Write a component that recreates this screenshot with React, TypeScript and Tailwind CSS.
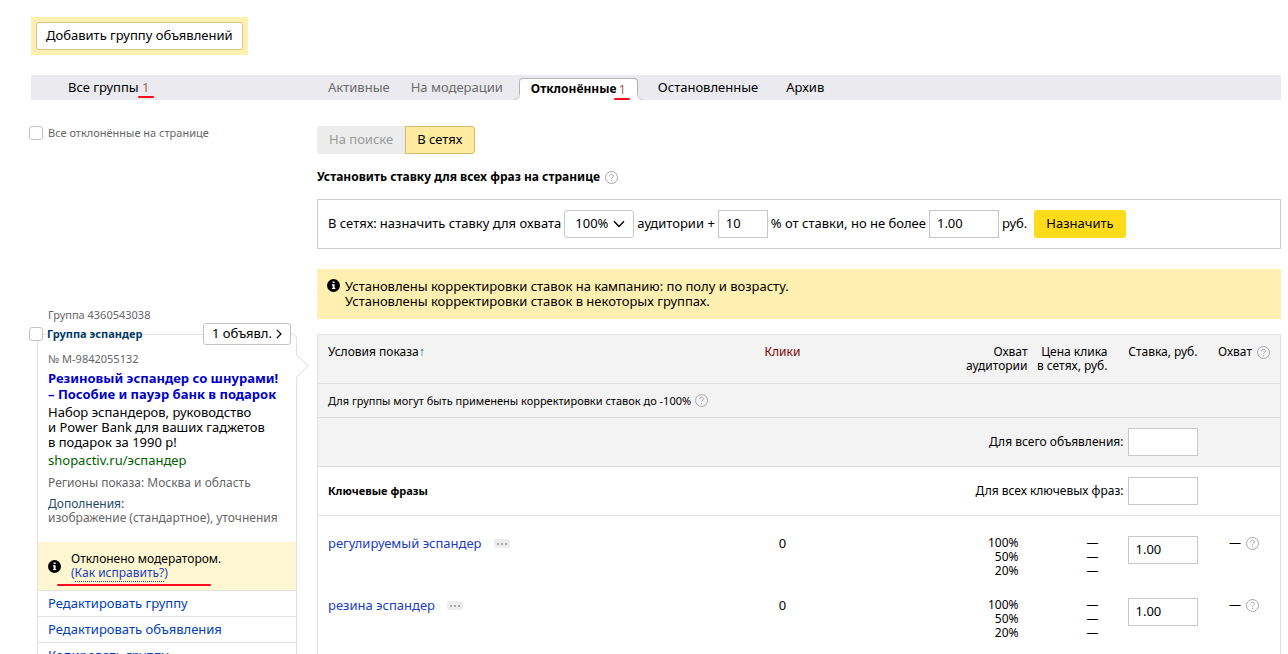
import type { ReactNode } from "react";
import clsx from "clsx";

interface Phrase {
  id: number;
  text: string;
  clicks: number;
  bid: string;
}

const phrases: Phrase[] = [
  { id: 1, text: "регулируемый эспандер", clicks: 0, bid: "1.00" },
  { id: 2, text: "резина эспандер", clicks: 0, bid: "1.00" },
];

const coverage = ["100%", "50%", "20%"];

function HelpIcon() {
  return (
    <svg className="inline-block h-[13px] w-[13px] shrink-0" viewBox="0 0 13 13" fill="none" stroke="#a8a8a8">
      <circle cx="6.5" cy="6.5" r="6" />
      <path d="M4.6 5.2c0-1.2.8-1.9 1.9-1.9s1.9.7 1.9 1.7c0 1.3-1.8 1.4-1.8 2.8" />
      <path d="M6.6 8.9v1.2" />
    </svg>
  );
}

function InfoIcon() {
  return (
    <svg className="h-[13px] w-[13px] shrink-0" viewBox="0 0 13 13">
      <circle cx="6.5" cy="6.5" r="6.5" fill="#000" />
      <path d="M5.6 2.4h2v1.7h-2zM4.9 5.3h2.7v3.6h.7v1.2H4.9V8.9h.8V6.5h-.8z" fill="#fff" />
    </svg>
  );
}

function Checkbox({ id }: { id: string }) {
  return (
    <input
      id={id}
      type="checkbox"
      className="h-[14px] w-[14px] shrink-0 appearance-none rounded-[3px] border border-[#c4c4c4] bg-white checked:bg-[#ffdb4d]"
    />
  );
}

function Field({ id, value = "", className, label }: { id: string; value?: string; className?: string; label?: string }) {
  return (
    <input
      id={id}
      type="text"
      defaultValue={value}
      aria-label={label}
      className={clsx("h-7 border border-[#c8c8c8] bg-white px-[7px] pb-[2px] text-[13px] text-black outline-none", className)}
    />
  );
}

// Счётчик с красным подчёркиванием
function Count({ children }: { children: ReactNode }) {
  return (
    <span className="relative text-[13px] font-normal text-[#996658]">
      {children}
      <span className="absolute -inset-x-1 top-full h-[2px] rounded-full bg-[#ff0a1e]" />
    </span>
  );
}

function Tabs() {
  return (
    <nav className="mt-5 flex h-[25px] bg-[#eaeaef] text-[13px] leading-[25px]">
      <a href="#all" className="w-[297px] shrink-0 pl-[37px]">
        Все группы <Count>1</Count>
      </a>
      <a href="#active" className="text-[#6b6b6b]">Активные</a>
      <a href="#moderation" className="ml-[21px] text-[#6b6b6b]">На модерации</a>
      <a
        href="#rejected"
        className="relative ml-4 flex h-[22px] items-center gap-[2px] self-end rounded-t-[4px] border-x border-t border-[#b4b4b8] bg-white px-[11px] pb-[2px] leading-[18px] font-bold"
      >
        <span className="text-[12px]">Отклонённые</span>
        <Count>1</Count>
        <svg className="absolute bottom-0 -left-[6px] h-[6px] w-[6px]" viewBox="0 0 6 6">
          <path d="M6 0v6H0v-.5C3.500 5.500 5.500 4 5.500 0z" fill="#fff" />
          <path d="M0 5.500C3.500 5.500 5.500 4 5.500 0" fill="none" stroke="#c4c4c8" />
        </svg>
        <svg className="absolute -right-[6px] bottom-0 h-[6px] w-[6px]" viewBox="0 0 6 6">
          <path d="M0 0v6h6v-.5C2.500 5.500.5 4 .5 0z" fill="#fff" />
          <path d="M6 5.500C2.500 5.500.5 4 .5 0" fill="none" stroke="#c4c4c8" />
        </svg>
      </a>
      <a href="#stopped" className="ml-5">Остановленные</a>
      <a href="#archive" className="ml-7">Архив</a>
    </nav>
  );
}

function GroupCard() {
  return (
    <section className="mt-[168px]">
      <p className="ml-[17px] text-[11px] leading-[14px] text-[#666]">Группа 4360543038</p>
      <div className="relative z-10 -ml-[2px] mt-[1px] flex h-[22px] items-center">
        <Checkbox id="group" />
        <label htmlFor="group" className="ml-1 bg-white text-[11px] font-bold text-[#003a66]">
          Группа эспандер
        </label>
        <button type="button" className="mr-[26px] ml-auto flex h-[22px] items-center gap-1 rounded-[3px] border border-[#c4c4c4] bg-white px-2 text-[13px]">
          1 объявл.
          <svg className="h-[10px] w-[6px]" viewBox="0 0 6 10" fill="none" stroke="#000" strokeWidth="1.2">
            <path d="M.8.8 5 5 .8 9.2" />
          </svg>
        </button>
      </div>
      <div className="relative -mt-[11px] mr-5 ml-[6px] rounded-t-[4px] border border-[#e2e2e2]">
        <svg className="absolute top-[18px] -right-[13px] h-[26px] w-[13px]" viewBox="0 0 13 26" fill="#fff" stroke="#dcdcdc">
          <path d="M0 1 12.2 13 0 25" />
        </svg>
        <div className="px-[10px] pt-[17px] pb-[17px]">
          <p className="text-[11px] leading-[14px] text-[#666]">№ M-9842055132</p>
          <h3 className="mt-1 text-[13px] leading-4 font-bold whitespace-nowrap text-[#0000c8]">
            Резиновый эспандер со шнурами!
            <br />– Пособие и пауэр банк в подарок
          </h3>
          <p className="mt-[3px] text-[13px] leading-[15px]">
            Набор эспандеров, руководство
            <br />и Power Bank для ваших гаджетов
            <br />в подарок за 1990 р!
          </p>
          <a href="#site" className="mt-[3px] block text-[13px] leading-[15px] text-[#006000]">shopactiv.ru/эспандер</a>
          <p className="mt-2 text-[12px] leading-[14px] text-[#666]">Регионы показа: Москва и область</p>
          <p className="mt-[7px] text-[12px] leading-[14px] whitespace-nowrap text-[#666]">
            <span className="text-[#1f4a66]">Дополнения:</span>
            <br />
            изображение (стандартное), уточнения
          </p>
        </div>
        <div className="flex h-12 items-center gap-[10px] bg-[#fff6d2] px-[10px] text-[12px] leading-[14px]">
          <InfoIcon />
          <p className="relative">
            Отклонено модератором.
            <br />
            <a href="#fix" className="text-[#1a3dc1]">
              (<span className="border-b border-dotted border-[#1a3dc1]">Как исправить?</span>)
            </a>
            <span className="absolute top-8 -left-[14px] h-[2px] w-[154px] rounded-full bg-[#ff0a1e]" />
          </p>
        </div>
        <ul className="text-[13px] leading-[25px] text-[#0040b8]">
          {["Редактировать группу", "Редактировать объявления", "Копировать группу"].map((item) => (
            <li key={item} className="border-t border-[#e2e2e2] px-[10px]">
              <a href="#edit">{item}</a>
            </li>
          ))}
        </ul>
      </div>
    </section>
  );
}

function BidForm() {
  return (
    <form className="mt-[14px] flex h-[50px] items-center gap-[3px] border border-[#ccc] px-[10px] text-[13px] whitespace-nowrap">
      <label htmlFor="share">
        <span className="mr-[3px]">В сетях:</span>назначить ставку для охвата
      </label>
      <span className="relative">
        <select id="share" className="h-7 w-[70px] appearance-none rounded-[3px] border border-[#c8c8c8] bg-white pl-[10px]">
          <option>100%</option>
          <option>50%</option>
          <option>20%</option>
        </select>
        <svg className="pointer-events-none absolute top-[10px] right-[9px] h-2 w-3" viewBox="0 0 12 8" fill="none" stroke="#000" strokeWidth="1.4">
          <path d="M1 1.2 6 6.400 11 1.2" />
        </svg>
      </span>
      <label htmlFor="plus">аудитории +</label>
      <Field id="plus" value="10" className="w-[50px]" />
      <label htmlFor="limit">% от ставки, но не более</label>
      <Field id="limit" value="1.00" className="w-[70px]" />
      <span>руб.</span>
      <button type="button" className="ml-1 h-7 rounded-[3px] bg-[#ffdb1a] px-3">Назначить</button>
    </form>
  );
}

function PhraseTable() {
  return (
    <table className="mt-[15px] w-full table-fixed border border-[#e2e2e2] text-[12px] leading-[14px]">
      <colgroup>
        <col />
        <col className="w-[100px]" />
        <col className="w-[195px]" />
        <col className="w-[80px]" />
        <col className="w-[90px]" />
        <col className="w-[83px]" />
      </colgroup>
      <thead className="bg-[#f3f3f3]">
        <tr className="h-[49px] border-b border-[#dedede] align-top">
          <th className="pt-[10px] pl-[10px] text-left font-normal">
            Условия показа<span className="text-[#1f4a66]">↑</span>
          </th>
          <th className="pt-[10px] font-normal text-[#800000]">Клики</th>
          <th className="pt-[10px] text-right font-normal">Охват<br />аудитории</th>
          <th className="pt-[10px] text-right font-normal whitespace-nowrap">Цена клика<br />в сетях, руб.</th>
          <th className="pt-[10px] text-right font-normal">Ставка, руб.</th>
          <th className="pt-[10px] pr-[10px] font-normal">
            <span className="flex items-center justify-end gap-[5px]">Охват <HelpIcon /></span>
          </th>
        </tr>
      </thead>
      <tbody>
        <tr className="h-[34px] border-b border-[#dedede] bg-[#f3f3f3]">
          <td colSpan={6} className="px-[10px] text-[11px]">
            <span className="flex items-center gap-1">Для группы могут быть применены корректировки ставок до -100% <HelpIcon /></span>
          </td>
        </tr>
        <tr className="h-[49px] border-b border-[#dedede] bg-[#f3f3f3]">
          <td colSpan={5}>
            <div className="flex items-center justify-end gap-1">
              <label htmlFor="ad-bid">Для всего объявления:</label>
              <Field id="ad-bid" className="w-[70px]" />
            </div>
          </td>
          <td />
        </tr>
        <tr className="h-[49px] border-b border-[#e2e2e2]">
          <th className="pl-[10px] text-left text-[11px] font-bold">Ключевые фразы</th>
          <td colSpan={4}>
            <div className="flex items-center justify-end gap-1">
              <label htmlFor="all-bid">Для всех ключевых фраз:</label>
              <Field id="all-bid" className="w-[70px]" />
            </div>
          </td>
          <td />
        </tr>
        {phrases.map((p) => (
          <tr key={p.id} className="h-[62px] align-top last:h-[80px]">
            <td className="pt-5 pl-[10px] text-[13px] leading-[14px]">
              <span className="flex items-center gap-3">
                <a href="#phrase" className="text-[#1a3dc1]">{p.text}</a>
                <button type="button" aria-label="Ещё" className="flex h-[9px] w-4 items-center justify-center gap-[2px] rounded-[2px] bg-[#ececec] pt-[2px]">
                  {[0, 1, 2].map((dot) => (
                    <span key={dot} className="h-[2px] w-[2px] bg-[#a6a6a6]" />
                  ))}
                </button>
              </span>
            </td>
            <td className="pt-5 text-center text-[13px] leading-[14px]">{p.clicks}</td>
            <td className="pt-5 pr-[9px] text-right">
              {coverage.map((c) => <div key={c}>{c}</div>)}
            </td>
            <td className="pt-5 pr-[9px] text-right">
              {coverage.map((c) => <div key={c}>—</div>)}
            </td>
            <td className="pt-5 text-right">
              <Field id={`bid-${p.id}`} value={p.bid} label={p.text} className="w-[70px]" />
            </td>
            <td className="pt-5 pr-[21px]">
              <span className="flex items-center justify-end gap-[5px]">— <HelpIcon /></span>
            </td>
          </tr>
        ))}
      </tbody>
    </table>
  );
}

export default function App() {
  return (
    <div className="h-screen overflow-hidden bg-white pt-[17px] pr-[7px] pl-[31px] font-['Noto_Sans',sans-serif] text-black">
      <div className="w-fit bg-[#ffefb0] p-[5px]">
        <button type="button" className="block h-7 rounded-[3px] border border-[#d8c48c] bg-white px-[9px] text-[13px]">
          Добавить группу объявлений
        </button>
      </div>

      <Tabs />

      <div className="mt-[26px] flex">
        <aside className="w-[286px] shrink-0">
          <div className="-ml-[2px] flex h-[14px] items-center gap-[5px]">
            <Checkbox id="all-rejected" />
            <label htmlFor="all-rejected" className="text-[11px] text-[#666]">Все отклонённые на странице</label>
          </div>
          <GroupCard />
        </aside>

        <main className="min-w-0 flex-1">
          <div className="flex text-[13px]">
            <button type="button" className="h-7 rounded-l-[3px] bg-[#ececec] px-3 text-[#9a9a9a]">На поиске</button>
            <button type="button" className="h-7 rounded-r-[3px] border border-[#d9b96c] bg-[#ffeba0] px-[11px]">В сетях</button>
          </div>
          <h2 className="mt-[15px] flex h-4 items-center gap-[5px] text-[12px] font-bold">
            Установить ставку для всех фраз на странице <HelpIcon />
          </h2>

          <BidForm />

          <div className="mt-5 flex gap-[5px] bg-[#ffefb0] px-[10px] py-[10px] text-[13px] leading-[15px]">
            <InfoIcon />
            <p>
              Установлены корректировки ставок на кампанию: по полу и возрасту.
              <br />
              Установлены корректировки ставок в некоторых группах.
            </p>
          </div>

          <PhraseTable />
        </main>
      </div>
    </div>
  );
}
